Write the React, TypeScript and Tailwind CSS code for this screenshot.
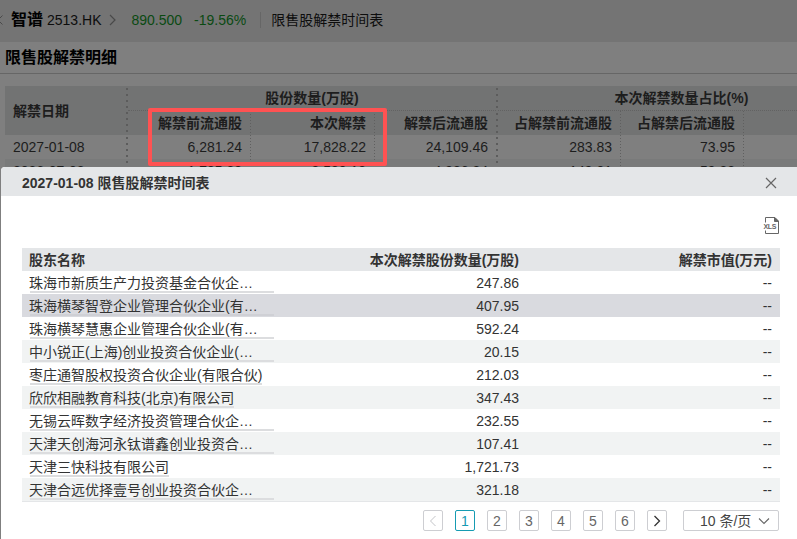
import { Fragment } from "react";

const rows: { name: string; amount: string; full: boolean }[] = [
  { name: "珠海市新质生产力投资基金合伙企…", amount: "247.86", full: true },
  { name: "珠海横琴智登企业管理合伙企业(有…", amount: "407.95", full: true },
  { name: "珠海横琴慧惠企业管理合伙企业(有…", amount: "592.24", full: true },
  { name: "中小锐正(上海)创业投资合伙企业(…", amount: "20.15", full: true },
  { name: "枣庄通智股权投资合伙企业(有限合伙)", amount: "212.03", full: false },
  { name: "欣欣相融教育科技(北京)有限公司", amount: "347.43", full: false },
  { name: "无锡云晖数字经济投资管理合伙企…", amount: "232.55", full: true },
  { name: "天津天创海河永钛谱鑫创业投资合…", amount: "107.41", full: true },
  { name: "天津三快科技有限公司", amount: "1,721.73", full: false },
  { name: "天津合远优择壹号创业投资合伙企…", amount: "321.18", full: true },
];

const subHeads = ["解禁前流通股", "本次解禁", "解禁后流通股", "占解禁前流通股", "占解禁后流通股", ""];
const data = [
  ["2027-01-08", "6,281.24", "17,828.22", "24,109.46", "283.83", "73.95", ""],
  ["2026-07-08", "1,705.23", "3,580.18", "4,986.84", "149.01", "59.83", ""],
];

// Square dots, 2px wide and 6px apart, along the right edge of a cell
const thickEdge =
  "bg-[linear-gradient(#5c5c5c_2px,transparent_2px)] bg-[length:2px_6px] bg-[position:right_2px] bg-repeat-y";
// 1px dots along the right edge of a cell
const thinEdge =
  "bg-[linear-gradient(#5f5f5f_1px,transparent_1px)] bg-[length:1px_3px] bg-[position:right_top] bg-repeat-y";

function columnEdge(i: number) {
  if (i === 0 || i === 3) return `${thickEdge} pr-[10px]`;
  if (i < 6) return `${thinEdge} pr-[9px]`;
  return "";
}

function TopBar() {
  return (
    <div className="flex h-[42px] items-center bg-[#747474] pb-[2px] text-[#0d0d0d]">
      <svg className="h-[12px] w-[4px]" viewBox="0 0 4 12" fill="none" stroke="#4a4a4a">
        <path d="M-2 6 2.5 1.5M-2 6 2.5 10.5" />
      </svg>
      <span className="ml-[7px] text-[16px] font-bold text-black">智谱</span>
      <span className="ml-[4px]">2513.HK</span>
      <svg className="ml-[7px] h-[12px] w-[8px]" viewBox="0 0 8 12" fill="none" stroke="#4a4a4a" strokeWidth="1.2">
        <path d="M1 1 6 6 1 11" />
      </svg>
      <span className="ml-[15px] text-[#0a4a12]">890.500</span>
      <span className="ml-[12px] text-[#0a4a12]">-19.56%</span>
      <span className="ml-[14px] h-4 w-px bg-[#666]" />
      <span className="ml-[10px]">限售股解禁时间表</span>
    </div>
  );
}

function SummaryTable() {
  return (
    <div className="mt-[12px] ml-[5px] grid h-[81px] grid-cols-[123px_123px_124px_123px_123px_123px_53px] grid-rows-[25px_24px_24px_24px] overflow-hidden text-[#1d1d1d]">
      <div className={`row-span-2 flex items-center bg-[#727373] pl-2 font-bold ${thickEdge}`}>解禁日期</div>
      <div className={`col-span-3 flex bg-[#727373] font-bold ${thickEdge}`}>
        <span className="mr-[2px] flex flex-1 items-center justify-center border-b border-dotted border-[#626262]">
          股份数量(万股)
        </span>
      </div>
      <div className="col-span-3 flex items-center justify-center border-b border-dotted border-[#626262] bg-[#727373] pl-[68px] font-bold">
        <span className="whitespace-nowrap">本次解禁数量占比(%)</span>
      </div>
      {subHeads.map((h, i) => (
        <div
          key={i}
          className={`flex items-center justify-end bg-[#727373] font-bold whitespace-nowrap ${columnEdge(i + 1)}`}
        >
          {h}
        </div>
      ))}
      {data.map((r, k) => (
        <Fragment key={k}>
          {r.map((c, i) => (
            <div
              key={i}
              className={`flex items-center ${i === 0 ? "pl-2" : "justify-end"} ${k ? "bg-[#797a7a]" : "bg-[#7f7f7f]"} ${columnEdge(i)}`}
            >
              {c}
            </div>
          ))}
        </Fragment>
      ))}
    </div>
  );
}

function Pager() {
  const box = "flex h-[21px] w-5 items-center justify-center rounded-[2px] border";
  return (
    <div className="mt-2 flex justify-end gap-3 pr-[18px] text-[#666]">
      <span className={`${box} border-[#cdced2]`}>
        <svg width="8" height="12" viewBox="0 0 8 12" fill="none" stroke="#c3c4c8">
          <path d="M6.5 1 1.5 6 6.5 11" />
        </svg>
      </span>
      <span className={`${box} border-[#169bb2] text-[#169bb2]`}>1</span>
      {["2", "3", "4", "5", "6"].map((n) => (
        <span key={n} className={`${box} border-[#cdced2]`}>
          {n}
        </span>
      ))}
      <span className={`${box} border-[#cdced2]`}>
        <svg width="8" height="12" viewBox="0 0 8 12" fill="none" stroke="#333" strokeWidth="1.3">
          <path d="M1.5 1 6.5 6 1.5 11" />
        </svg>
      </span>
      <span className="ml-1 flex h-[21px] w-24 items-center rounded-[2px] border border-[#cdced2] pl-4 text-[#444]">
        10 条/页
        <svg className="ml-[7px]" width="12" height="8" viewBox="0 0 12 8" fill="none" stroke="#666" strokeWidth="1.1">
          <path d="M1 1.5 6 6.5 11 1.5" />
        </svg>
      </span>
    </div>
  );
}

function Dialog() {
  return (
    <section className="absolute top-[167px] right-0 bottom-0 left-px overflow-hidden rounded-tl-[4px] bg-white text-[#333]">
      <header className="flex h-[29px] items-center justify-between bg-[#e4e6e8] pt-[2px] pr-5 pl-[21px]">
        <h2 className="font-bold">2027-01-08 限售股解禁时间表</h2>
        <svg width="12" height="12" viewBox="0 0 12 12" fill="none" stroke="#666" strokeWidth="1.2">
          <path d="M1 1 11 11M11 1 1 11" />
        </svg>
      </header>
      <div className="flex h-[52px] items-start justify-end pt-[21px] pr-[17px]">
        <svg width="17" height="17" viewBox="0 0 17 17" fill="none" stroke="#666">
          <path d="M2.5 5.5V.5H12L15.500 4V16.500H2.500V13.500" />
          <path d="M11.500 .5V4.500H15.500Z" fill="#666" />
          <text
            x="0.5"
            y="12"
            fontSize="7"
            fontWeight="700"
            fontFamily="Liberation Sans, sans-serif"
            fill="#666"
            stroke="none"
            textLength="13"
          >
            XLS
          </text>
        </svg>
      </div>
      <div className="mr-[17px] ml-[21px]">
        <div className="grid h-[23px] grid-cols-[252px_253px_253px] items-center bg-[#e4e6e8] font-bold">
          <span className="pl-[7px]">股东名称</span>
          <span className="pr-2 text-right">本次解禁股份数量(万股)</span>
          <span className="pr-2 text-right">解禁市值(万元)</span>
        </div>
        {rows.map((r, i) => (
          <div
            key={r.name}
            className={`grid h-[23px] grid-cols-[252px_253px_253px] items-center ${i === 1 ? "bg-[#d9dadf]" : i % 2 ? "bg-[#f1f3f3]" : ""}`}
          >
            <span className="flex pl-2">
              <span
                className={`h-[21px] border-b-2 -indent-px leading-[22px] whitespace-nowrap ${r.full ? "w-full" : ""} ${i === 1 ? "border-[#cfd0d5]" : "border-[#dcdddf]"}`}
              >
                {r.name}
              </span>
            </span>
            <span className="pr-2 text-right">{r.amount}</span>
            <span className="pr-2 text-right">--</span>
          </div>
        ))}
        <div className="h-px bg-[#e4e6e8]" />
      </div>
      <Pager />
    </section>
  );
}

export default function App() {
  return (
    <main className="relative h-[539px] w-[797px] overflow-hidden bg-[#7f7f7f] font-['Liberation_Sans','Noto_Sans_CJK_SC',sans-serif] text-[14px] leading-[20px]">
      <TopBar />
      <h1 className="flex h-8 items-center border-b border-[#666] pl-[5px] text-[16px] font-bold text-black">
        限售股解禁明细
      </h1>
      <SummaryTable />
      <Dialog />
      <div className="absolute top-[108px] left-[148px] h-[58px] w-[239px] rounded-[2px] border-4 border-[#ff5252]" />
    </main>
  );
}
